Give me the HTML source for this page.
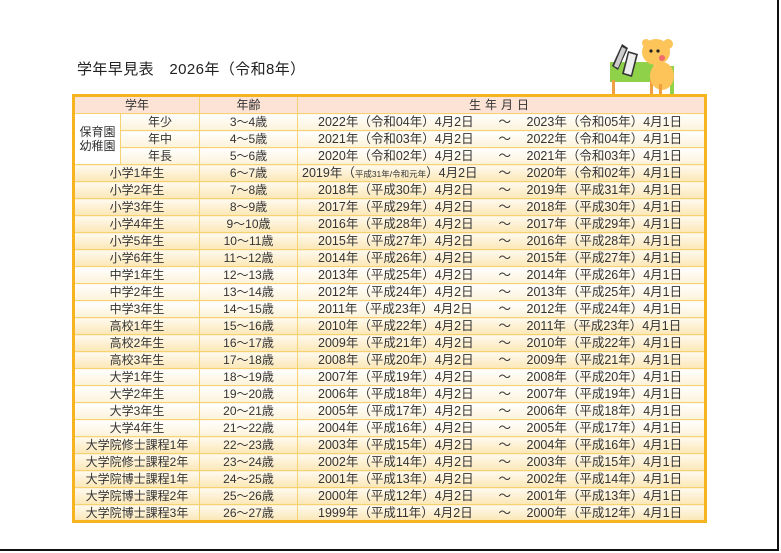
<!DOCTYPE html>
<html><head><meta charset="utf-8"><style>
body{margin:0;width:781px;height:553px;background:#fff;position:relative;overflow:hidden;font-family:"Liberation Sans","Noto Sans CJK JP",sans-serif;color:#333}
.frame{position:absolute;left:-3px;top:-3px;width:780px;height:552px;border-right:2px solid #111;border-bottom:2px solid #111}
.title{position:absolute;left:77px;top:58px;font-size:15px;color:#222;letter-spacing:0.4px}
table{position:absolute;left:72px;top:94px;width:632px;border-collapse:collapse;border:3px solid #f6b420;table-layout:fixed;font-size:12px}
td{height:17px;padding:0;text-align:center;border:1px solid #f7d270;white-space:nowrap;line-height:14px;overflow:hidden;box-sizing:border-box}
tr.h td{background:#fce3d6;height:18px}
tr.c td{background:linear-gradient(#fffaef,#fbe7b6)}
tr.w td{background:linear-gradient(#fff,#fdf2d8)}
td.f,td.t,td.e{font-size:12.5px}
td.f{border-right:none;text-align:left;padding-left:20px}td.t{border-left:none;border-right:none;text-align:left;padding-left:7px}td.e{border-left:none;text-align:left;padding-left:3px}
td.f.s{padding-left:4px;font-size:12.5px}
small{font-size:8.5px}
</style></head><body>
<div class="frame"></div>
<div class="title">学年早見表　2026年（令和8年）</div>
<svg style="position:absolute;left:604px;top:36px" width="80" height="58" viewBox="0 0 80 58">
<rect x="6" y="26" width="44" height="20" fill="#8fd24a"/>
<rect x="8" y="44" width="3" height="14" fill="#f0a040"/><rect x="46" y="44" width="3" height="14" fill="#f0a040"/>
<rect x="66" y="30" width="4" height="28" fill="#8fd24a"/>
<ellipse cx="58" cy="40" rx="12" ry="14" fill="#fdc45a"/>
<ellipse cx="52" cy="16" rx="14" ry="13" fill="#fdc45a"/><circle cx="64" cy="8" r="5" fill="#fdc45a"/><circle cx="42" cy="7" r="4" fill="#fdc45a"/>
<circle cx="47" cy="15" r="1.6" fill="#222"/><circle cx="54" cy="15" r="1.6" fill="#222"/><circle cx="58" cy="22" r="3" fill="#f26a6a"/>
<polygon points="8,30 18,8 24,12 14,34" fill="#333"/><polygon points="10,30 18,11 22,13 14,32" fill="#ccc"/>
<polygon points="18,38 24,15 34,18 28,41" fill="#333"/><polygon points="20,37 25,17 32,19 27,39" fill="#eee"/>
<rect x="55" y="48" width="3" height="10" fill="#f0a040"/>
</svg>
<table>
<colgroup><col style="width:47px"><col style="width:79px"><col style="width:98px"><col style="width:194px"><col style="width:32px"><col style="width:182px"></colgroup>
<tr class="h"><td colspan="2">学年</td><td>年齢</td><td colspan="3" style="letter-spacing:4px">生年月日</td></tr>
<tr class="w"><td rowspan="3" style="line-height:14px;background:#fff">保育園<br>幼稚園</td><td>年少</td><td>3～4歳</td><td class="f">2022年（令和04年）4月2日</td><td class="t">～</td><td class="e">2023年（令和05年）4月1日</td></tr>
<tr class="w"><td>年中</td><td>4～5歳</td><td class="f">2021年（令和03年）4月2日</td><td class="t">～</td><td class="e">2022年（令和04年）4月1日</td></tr>
<tr class="w"><td>年長</td><td>5～6歳</td><td class="f">2020年（令和02年）4月2日</td><td class="t">～</td><td class="e">2021年（令和03年）4月1日</td></tr>
<tr class="c"><td colspan="2">小学1年生</td><td>6～7歳</td><td class="f s">2019年（<small>平成31年/令和元年</small>）4月2日</td><td class="t">～</td><td class="e">2020年（令和02年）4月1日</td></tr>
<tr class="c"><td colspan="2">小学2年生</td><td>7～8歳</td><td class="f">2018年（平成30年）4月2日</td><td class="t">～</td><td class="e">2019年（平成31年）4月1日</td></tr>
<tr class="c"><td colspan="2">小学3年生</td><td>8～9歳</td><td class="f">2017年（平成29年）4月2日</td><td class="t">～</td><td class="e">2018年（平成30年）4月1日</td></tr>
<tr class="c"><td colspan="2">小学4年生</td><td>9～10歳</td><td class="f">2016年（平成28年）4月2日</td><td class="t">～</td><td class="e">2017年（平成29年）4月1日</td></tr>
<tr class="c"><td colspan="2">小学5年生</td><td>10～11歳</td><td class="f">2015年（平成27年）4月2日</td><td class="t">～</td><td class="e">2016年（平成28年）4月1日</td></tr>
<tr class="c"><td colspan="2">小学6年生</td><td>11～12歳</td><td class="f">2014年（平成26年）4月2日</td><td class="t">～</td><td class="e">2015年（平成27年）4月1日</td></tr>
<tr class="w"><td colspan="2">中学1年生</td><td>12～13歳</td><td class="f">2013年（平成25年）4月2日</td><td class="t">～</td><td class="e">2014年（平成26年）4月1日</td></tr>
<tr class="w"><td colspan="2">中学2年生</td><td>13～14歳</td><td class="f">2012年（平成24年）4月2日</td><td class="t">～</td><td class="e">2013年（平成25年）4月1日</td></tr>
<tr class="w"><td colspan="2">中学3年生</td><td>14～15歳</td><td class="f">2011年（平成23年）4月2日</td><td class="t">～</td><td class="e">2012年（平成24年）4月1日</td></tr>
<tr class="c"><td colspan="2">高校1年生</td><td>15～16歳</td><td class="f">2010年（平成22年）4月2日</td><td class="t">～</td><td class="e">2011年（平成23年）4月1日</td></tr>
<tr class="c"><td colspan="2">高校2年生</td><td>16～17歳</td><td class="f">2009年（平成21年）4月2日</td><td class="t">～</td><td class="e">2010年（平成22年）4月1日</td></tr>
<tr class="c"><td colspan="2">高校3年生</td><td>17～18歳</td><td class="f">2008年（平成20年）4月2日</td><td class="t">～</td><td class="e">2009年（平成21年）4月1日</td></tr>
<tr class="w"><td colspan="2">大学1年生</td><td>18～19歳</td><td class="f">2007年（平成19年）4月2日</td><td class="t">～</td><td class="e">2008年（平成20年）4月1日</td></tr>
<tr class="w"><td colspan="2">大学2年生</td><td>19～20歳</td><td class="f">2006年（平成18年）4月2日</td><td class="t">～</td><td class="e">2007年（平成19年）4月1日</td></tr>
<tr class="w"><td colspan="2">大学3年生</td><td>20～21歳</td><td class="f">2005年（平成17年）4月2日</td><td class="t">～</td><td class="e">2006年（平成18年）4月1日</td></tr>
<tr class="w"><td colspan="2">大学4年生</td><td>21～22歳</td><td class="f">2004年（平成16年）4月2日</td><td class="t">～</td><td class="e">2005年（平成17年）4月1日</td></tr>
<tr class="c"><td colspan="2">大学院修士課程1年</td><td>22～23歳</td><td class="f">2003年（平成15年）4月2日</td><td class="t">～</td><td class="e">2004年（平成16年）4月1日</td></tr>
<tr class="c"><td colspan="2">大学院修士課程2年</td><td>23～24歳</td><td class="f">2002年（平成14年）4月2日</td><td class="t">～</td><td class="e">2003年（平成15年）4月1日</td></tr>
<tr class="c"><td colspan="2">大学院博士課程1年</td><td>24～25歳</td><td class="f">2001年（平成13年）4月2日</td><td class="t">～</td><td class="e">2002年（平成14年）4月1日</td></tr>
<tr class="c"><td colspan="2">大学院博士課程2年</td><td>25～26歳</td><td class="f">2000年（平成12年）4月2日</td><td class="t">～</td><td class="e">2001年（平成13年）4月1日</td></tr>
<tr class="c"><td colspan="2">大学院博士課程3年</td><td>26～27歳</td><td class="f">1999年（平成11年）4月2日</td><td class="t">～</td><td class="e">2000年（平成12年）4月1日</td></tr>
</table>
</body></html>
